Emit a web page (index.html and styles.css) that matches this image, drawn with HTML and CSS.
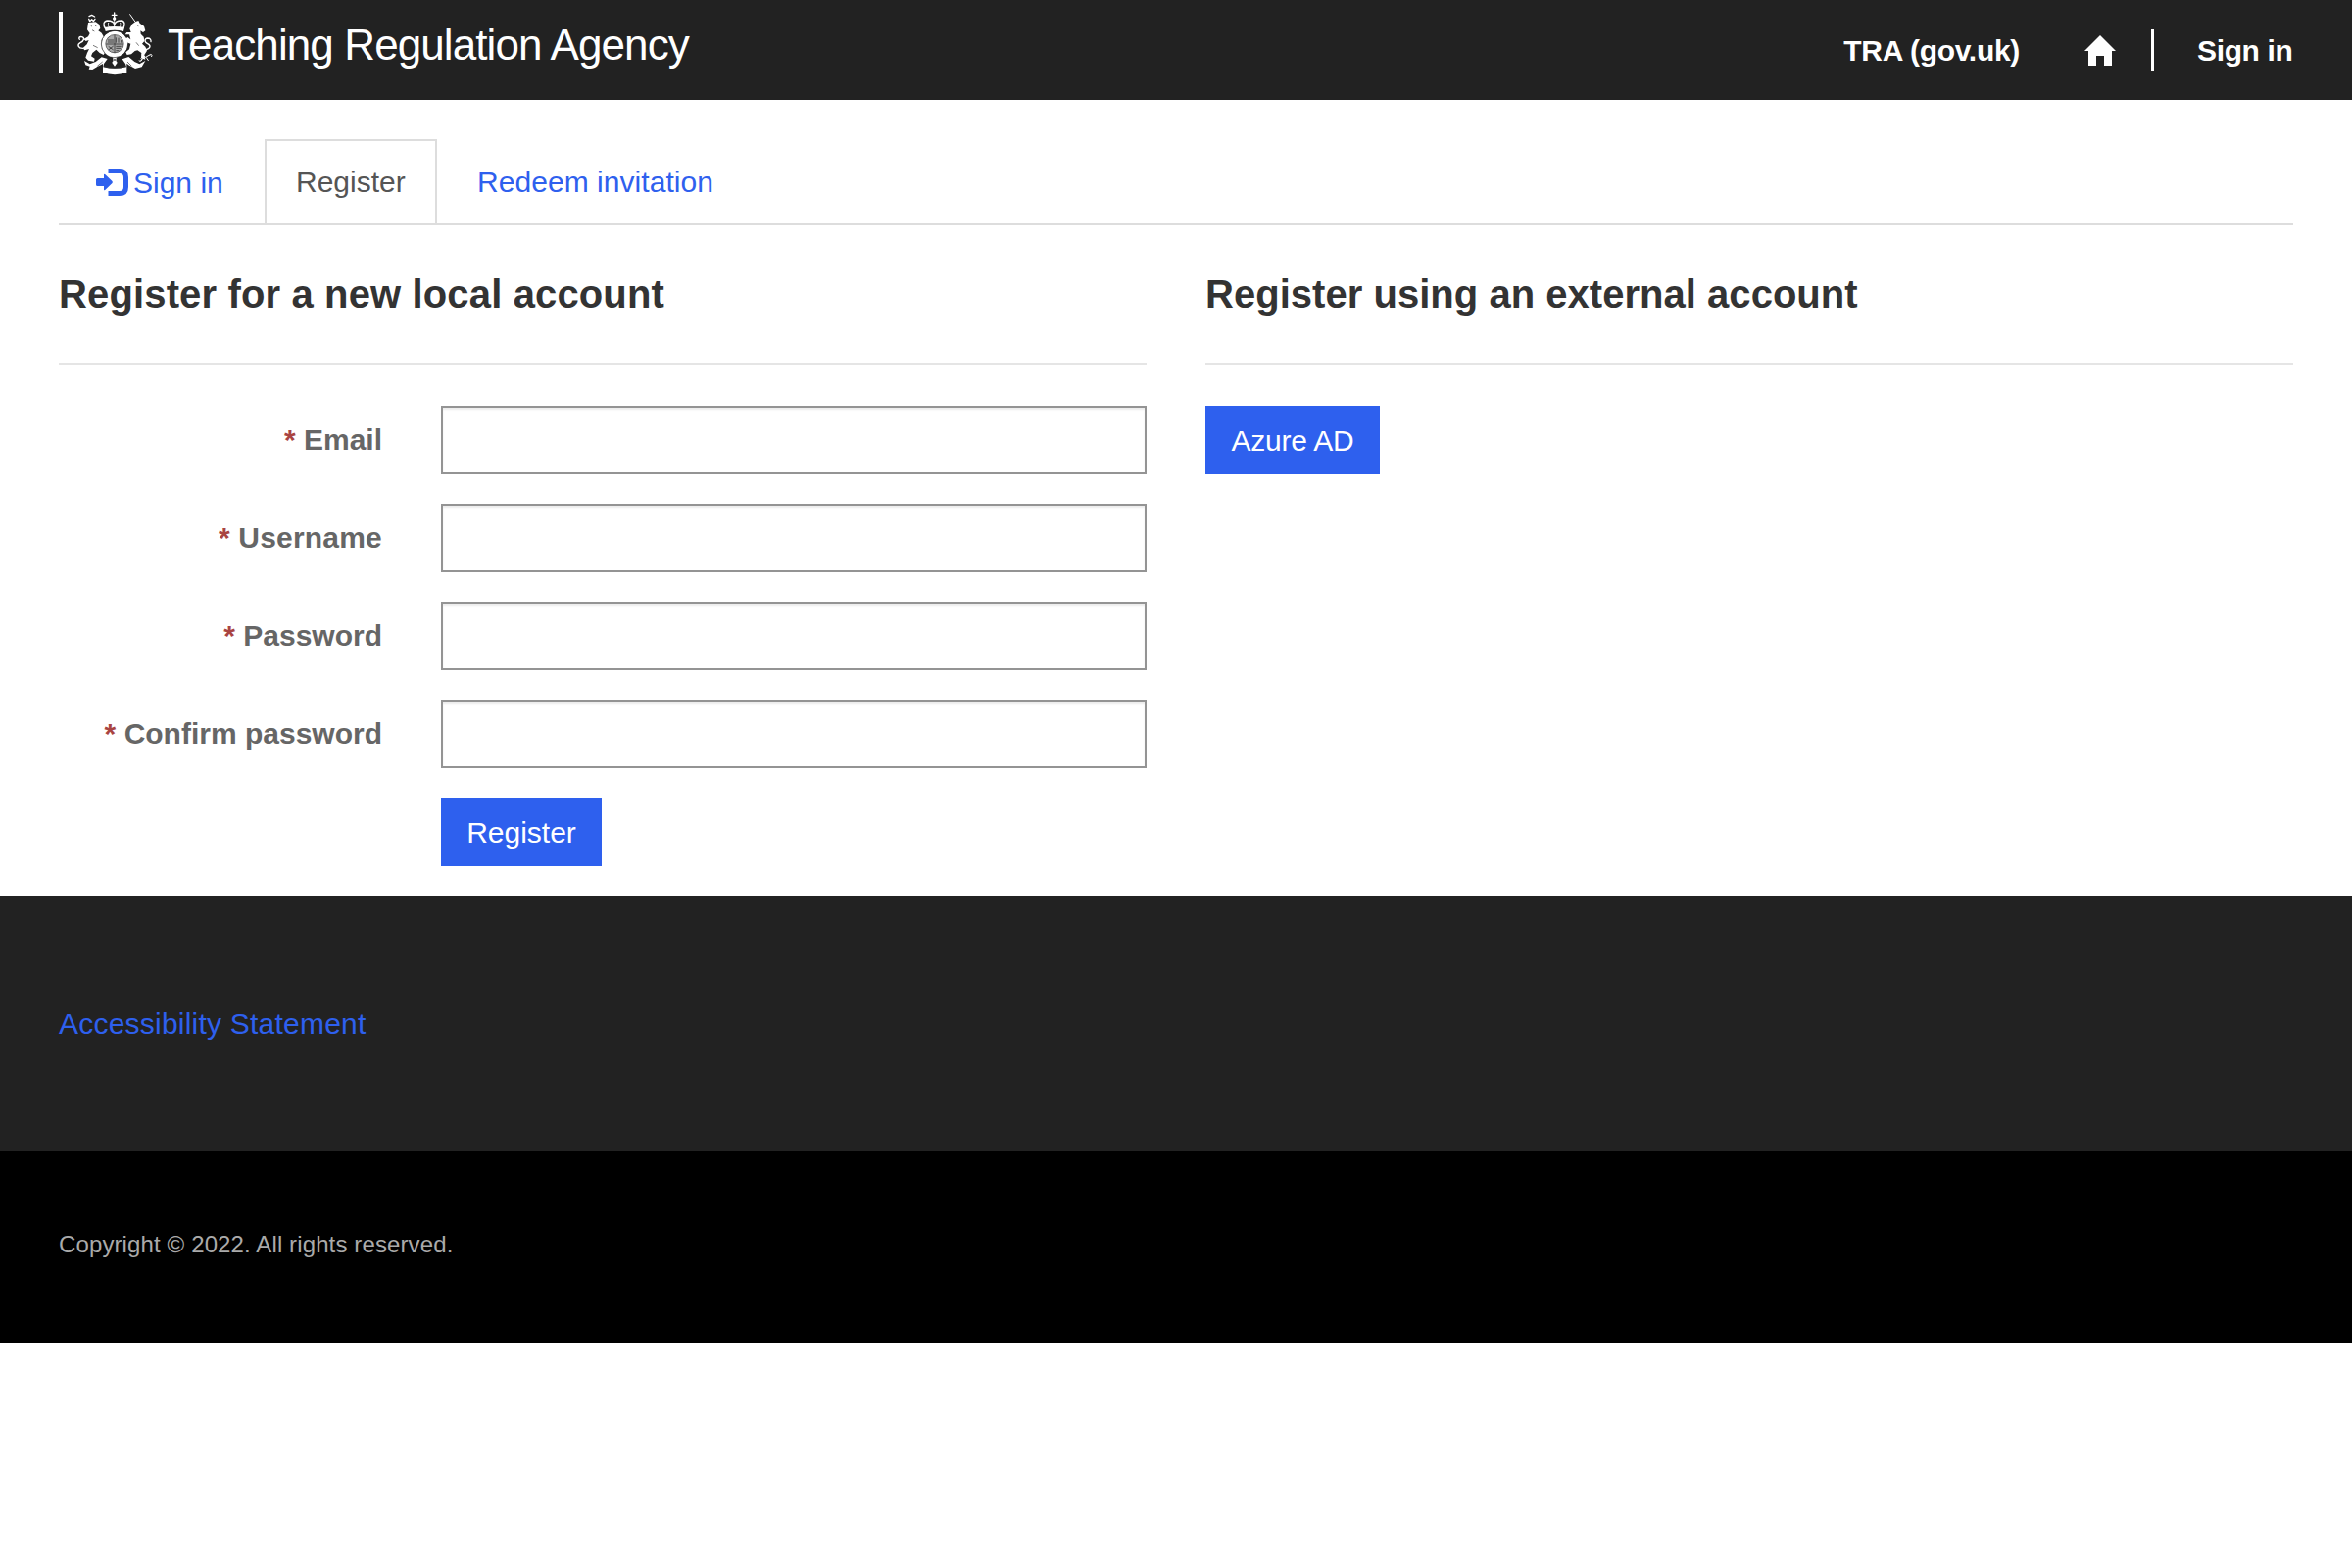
FILE: index.html
```html
<!DOCTYPE html>
<html lang="en">
<head>
<meta charset="utf-8">
<title>Register</title>
<link rel="stylesheet" href="styles.css">
</head>
<body>
<header class="navbar">
  <a class="brand">
    <span class="brand-bar"></span>
    <svg class="crest" viewBox="24 21 234 195" aria-hidden="true">
      <g fill="none" stroke="#fff" stroke-linecap="round" stroke-linejoin="round">
        <path stroke-width="4" d="M45 133C30 134 25 122 36 116C48 110 50 101 41 98C33 96 30 102 34 106"/>
        <path stroke-width="4" d="M237 137C251 134 253 124 242 119C231 114 232 103 242 102C250 102 253 108 252 113"/>
        <path stroke-width="4" d="M113 74C104 60 107 49 119 48C132 48 139 53 140 61C142 52 149 48 161 48C173 49 174 61 166 74"/>
        <path stroke-width="3" stroke-dasharray="3 3" d="M140 44V72M122 55C120 61 122 67 126 71M158 55C160 61 158 67 154 71"/>
        <path stroke-width="4" d="M140 24V44M133 31H147M62 43L65 50L71 44L76 50L81 43M63 35L71 31L80 36"/>
        <path stroke-width="3" d="M188 29L203 50M225 153L236 160L248 153M231 160L222 170M238 161L244 170M249 154A3 4 0 1 1 254 158M216 171A4 4 0 1 0 222 164"/>
      </g>
      <g fill="#fff">
        <path d="M110 69Q140 63 171 69L168 81Q140 74 113 81Z"/>
        <circle cx="140" cy="42" r="5"/>
        <path d="M60 54L83 52L94 60L97 72L91 79L101 86L108 98L101 108L102 133L112 144L107 153L95 147L85 137L73 147L69 157L80 164L78 173L60 170L52 161L57 147L63 135L49 139L44 132L56 121L62 108L53 111L46 105L60 97L65 87L57 76Z"/>
        <path d="M205 51L214 48L218 56L231 65L235 79L228 84L220 79L221 89L230 98L232 111L225 119L235 128L240 140L232 153L235 167L222 163L223 147L211 139L203 141L192 151L179 153L175 145L186 136L190 119L178 115L172 105L181 99L190 106L186 91L173 91L178 84L191 84L187 73L194 59Z"/>
        <circle cx="141" cy="120" r="40"/>
        <path d="M48 171L65 181L83 174L101 160L119 165L108 180L106 190Q141 199 177 190L174 180L164 166L184 159L202 174L217 181L235 171L224 190L204 195L186 185L178 179L178 207Q141 220 105 207L105 180L88 189L73 198L62 197L65 188L52 184Z"/>
        <path d="M133 157H149L145 169L149 177L141 188L133 177L137 169Z"/>
      </g>
      <circle cx="141" cy="119" r="27" fill="#aaa"/>
      <g fill="none" stroke="#333" stroke-width="2.500">
        <path d="M141 93V147M115 120H167M120 108H138M120 114H138M145 100V116M153 101V116M161 108V116M122 127L137 138M122 138L137 126M145 127H161M145 133H160M145 140H154"/>
        <path stroke-width="2" d="M108 188Q141 198 175 188M88 187L104 174M193 187L180 174M72 77L79 81M68 64L72 66M81 64L85 65M209 62L214 65M75 124L89 131M207 115L215 125M137 164L145 172M145 164L137 172"/>
      </g>
      <circle cx="141" cy="119" r="27.500" fill="none" stroke="#222" stroke-width="2"/>
      <circle cx="141" cy="120" r="41" fill="none" stroke="#222" stroke-width="2" stroke-dasharray="75 23 138 23"/>
    </svg>
    <span class="brand-name">Teaching Regulation Agency</span>
  </a>
  <nav class="nav">
    <a class="nav-tra">TRA (gov.uk)</a>
    <svg class="home" viewBox="0 0 32 31" aria-label="Home"><path fill="#fff" d="M16 0L32 16H28V31H20V21H12V31H4V16H0Z"/></svg>
    <span class="divider"></span>
    <a class="nav-signin">Sign in</a>
  </nav>
</header>
<main class="content">
  <div class="tabs">
    <a class="tab tab-signin">
      <svg class="login" viewBox="0 0 33 28" aria-hidden="true"><path fill="#2e60ee" d="M1.500 10H8V6.500Q8 5 9.500 6.300L16.500 13Q17.200 14 16.500 15L9.500 21.700Q8 23 8 21.500V18H1.500Q0 18 0 16.500V11.500Q0 10 1.500 10Z"/><path fill="none" stroke="#2e60ee" stroke-width="5" stroke-linejoin="round" d="M12.500 2.500H24Q30.500 2.500 30.500 9V19Q30.500 25.500 24 25.500H12.500"/></svg>
      <span>Sign in</span>
    </a>
    <a class="tab tab-active">Register</a>
    <a class="tab tab-redeem">Redeem invitation</a>
  </div>
  <div class="columns">
    <section>
      <h2 class="title title-local">Register for a new local account</h2>
      <form class="form">
        <label class="label" for="email"><span class="req">*</span> Email</label><input class="input" id="email" type="text">
        <label class="label label-user" for="user"><span class="req">*</span> Username</label><input class="input" id="user" type="text">
        <label class="label" for="pass"><span class="req">*</span> Password</label><input class="input" id="pass" type="password">
        <label class="label" for="confirm"><span class="req">*</span> Confirm password</label><input class="input" id="confirm" type="password">
        <button class="btn btn-register" type="button">Register</button>
      </form>
    </section>
    <section>
      <h2 class="title title-external">Register using an external account</h2>
      <button class="btn btn-azure" type="button">Azure AD</button>
    </section>
  </div>
</main>
<footer>
  <div class="footer-top"><a>Accessibility Statement</a></div>
  <div class="footer-bottom">Copyright © 2022. All rights reserved.</div>
</footer>
</body>
</html>
```
FILE: styles.css
```css
* { box-sizing: border-box; }
body {
  margin: 0;
  background: #fff;
  font-family: "Liberation Sans", Arial, sans-serif;
  font-size: 30px;
  line-height: 44px;
  color: #333;
}
.navbar {
  height: 102px;
  padding: 0 60px;
  background: #222;
  color: #fff;
  display: flex;
  justify-content: space-between;
  align-items: flex-start;
}
.brand { display: flex; align-items: flex-start; padding-top: 12px; }
.brand-bar { width: 4px; height: 63px; background: #fff; }
.crest { width: 78px; height: 65px; margin-left: 14px; }
.brand-name {
  margin-left: 15px;
  padding-top: 4px;
  font-size: 44px;
  line-height: 60px;
  letter-spacing: -0.9px;
  white-space: nowrap;
}
.nav { display: flex; align-items: center; height: 102px; font-weight: bold; }
.nav a { padding-top: 2px; white-space: nowrap; }
.nav-tra { letter-spacing: -0.3px; }
.home { width: 32px; height: 31px; margin-left: 66px; }
.divider { width: 3px; height: 42px; margin-left: 36px; background: #fff; }
.nav-signin { width: 98px; margin-left: 44px; letter-spacing: -0.35px; }
.content { height: 812px; padding: 40px 60px 30px; }
.tabs { display: flex; height: 88px; border-bottom: 2px solid #ddd; }
.tab { display: flex; align-items: center; height: 86px; color: #2e60ee; white-space: nowrap; }
.tab-signin { width: 210px; padding: 4px 0 0 38px; }
.login { width: 33px; height: 28px; margin: -2px 5px 0 0; }
.tab-active { width: 176px; padding-left: 30px; border: 2px solid #ddd; border-bottom: 0; color: #555; }
.tab-redeem { padding: 2px 0 0 41px; letter-spacing: 0.05px; }
.columns { display: grid; grid-template-columns: 1fr 1fr; gap: 60px; padding-top: 48px; }
.title {
  height: 94px;
  margin: 0 0 42px;
  border-bottom: 2px solid #e5e5e5;
  font-size: 40px;
  line-height: 44px;
  white-space: nowrap;
}
.title-local { letter-spacing: 0.14px; }
.title-external { letter-spacing: 0.03px; }
.form { display: grid; grid-template-columns: 330px 1fr; column-gap: 60px; row-gap: 30px; }
.label { padding-top: 13px; text-align: right; font-weight: bold; color: #666; white-space: nowrap; }
.label-user { letter-spacing: 0.2px; }
.req { color: #a94442; }
.input {
  height: 70px;
  padding: 0 24px;
  border: 2px solid #949494;
  border-radius: 0;
  background: #fff;
  box-shadow: inset 0 2px 2px rgba(0, 0, 0, 0.075);
  font: inherit;
}
.btn {
  height: 70px;
  padding: 1px 0 0;
  border: 0;
  background: #2e60ee;
  color: #fff;
  font: inherit;
}
.btn-register { grid-column: 2; width: 164px; }
.btn-azure { width: 178px; letter-spacing: -0.2px; }
.footer-top { height: 260px; padding: 109px 60px 0; background: #222; color: #2e60ee; letter-spacing: 0.22px; }
.footer-bottom { height: 196px; padding: 74px 60px 0; background: #000; color: #aaa; font-size: 24px; letter-spacing: 0.12px; }
```
